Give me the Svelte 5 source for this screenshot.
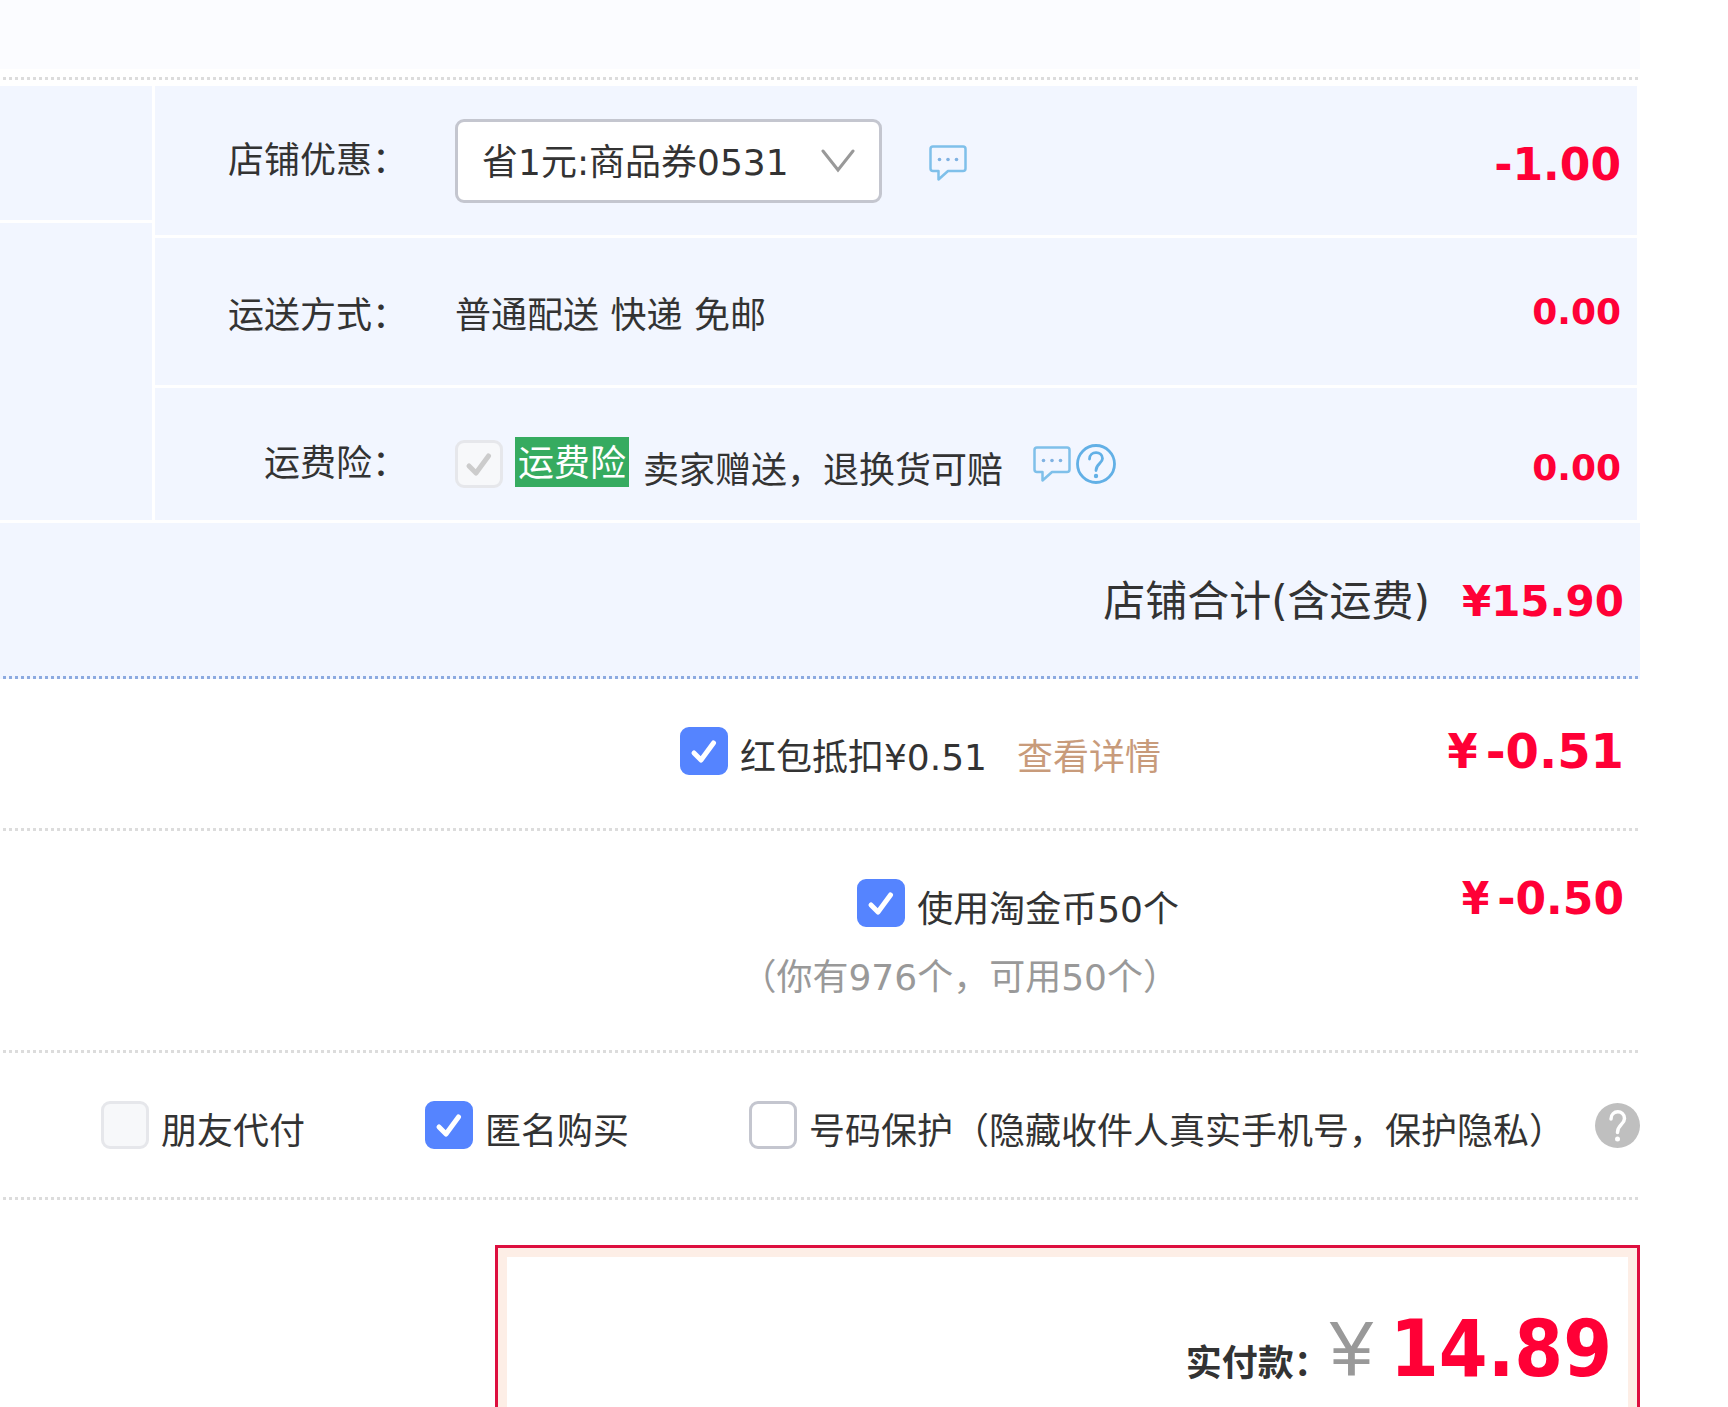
<script lang="ts">
  // Order options, toggled by the buyer
  let useRedPacket = $state(true);
  let useCoins = $state(true);
  let insurance = $state(true);
  let friendPay = $state(false);
  let anonymous = $state(true);
  let hideNumber = $state(false);

  let coupon = $state('0531');
</script>

{#snippet tick()}
  <svg class="tick" viewBox="0 0 48 48" aria-hidden="true">
    <path d="M14 26 L21 33 L33.500 16" />
  </svg>
{/snippet}

{#snippet chatIcon()}
  <svg class="chat" viewBox="0 0 38 36" aria-hidden="true">
    <path d="M4 1.5 H34 Q36.500 1.500 36.500 4 V23.500 Q36.500 26 34 26 H19 L9.500 34.500 V26 H4 Q1.500 26 1.500 23.500 V4 Q1.500 1.500 4 1.500 Z" />
    <circle cx="10.500" cy="14.500" r="1.800" />
    <circle cx="19" cy="14.500" r="1.800" />
    <circle cx="27.500" cy="14.500" r="1.800" />
  </svg>
{/snippet}

<main class="page">
  <header class="top"></header>
  <hr class="dots" />

  <section class="order">
    <div class="side">
      <div class="cell side-first"></div>
      <div class="cell side-rest"></div>
    </div>
    <div class="rows">
      <div class="cell row">
        <label class="name" for="coupon">店铺优惠：</label>
        <div class="value">
          <div class="picker">
            <select id="coupon" bind:value={coupon}>
              <option value="0531">省1元:商品券0531</option>
              <option value="none">不使用优惠</option>
            </select>
            <svg class="arrow" viewBox="0 0 34 24" aria-hidden="true">
              <path d="M2 2 L17 21 L32 2" />
            </svg>
          </div>
          <button class="icon-button after-picker" aria-label="留言">{@render chatIcon()}</button>
        </div>
        <strong class="amount big low">-1.00</strong>
      </div>

      <div class="cell row row-mid">
        <span class="name low">运送方式：</span>
        <div class="value low">普通配送 快递 免邮</div>
        <strong class="amount">0.00</strong>
      </div>

      <div class="cell row row-last">
        <span class="name">运费险：</span>
        <div class="value">
          <label class="check">
            <span class="box">
              <input type="checkbox" bind:checked={insurance} disabled />
              {@render tick()}
            </span>
            <span class="tag">运费险</span>
            <span class="gift">卖家赠送，退换货可赔</span>
          </label>
          <button class="icon-button after-gift" aria-label="留言">{@render chatIcon()}</button>
          <button class="icon-button" aria-label="帮助">
            <svg class="help" viewBox="0 0 40 40" aria-hidden="true">
              <circle class="ring" cx="20" cy="20" r="18.500" />
              <path d="M13.500 15 C13.500 6.500 26.500 6.500 26.500 14.500 C26.500 19.500 20 19.500 20 26.500" />
              <circle class="dot" cx="20" cy="32" r="2.200" />
            </svg>
          </button>
        </div>
        <strong class="amount low">0.00</strong>
      </div>
    </div>
  </section>

  <section class="total">
    <span>店铺合计(含运费)</span>
    <strong class="amount">¥15.90</strong>
  </section>
  <hr class="dots blue" />

  <section class="discount packet">
    <div class="choice">
      <label class="check">
        <span class="box">
          <input type="checkbox" bind:checked={useRedPacket} />
          {@render tick()}
        </span>
        <span>红包抵扣¥0.51</span>
      </label>
      <a href="#details">查看详情</a>
    </div>
    <strong class="amount huge"><span class="yen">¥</span>-0.51</strong>
  </section>
  <hr class="dots" />

  <section class="discount coins">
    <div class="choice">
      <label class="check">
        <span class="box">
          <input type="checkbox" bind:checked={useCoins} />
          {@render tick()}
        </span>
        <span>使用淘金币50个</span>
      </label>
      <p class="note">（你有976个，可用50个）</p>
    </div>
    <strong class="amount big"><span class="yen">¥</span>-0.50</strong>
  </section>
  <hr class="dots" />

  <section class="options">
    <label class="check">
      <span class="box">
        <input type="checkbox" bind:checked={friendPay} disabled />
        {@render tick()}
      </span>
      <span>朋友代付</span>
    </label>
    <label class="check">
      <span class="box">
        <input type="checkbox" bind:checked={anonymous} />
        {@render tick()}
      </span>
      <span>匿名购买</span>
    </label>
    <label class="check">
      <span class="box">
        <input type="checkbox" bind:checked={hideNumber} />
        {@render tick()}
      </span>
      <span>号码保护（隐藏收件人真实手机号，保护隐私）</span>
    </label>
    <button class="icon-button push" aria-label="帮助">
      <svg class="help-solid" viewBox="0 0 45 45" aria-hidden="true">
        <circle class="disc" cx="22.500" cy="22.500" r="22.500" />
        <path d="M16 16 C16 6.500 29.500 6.500 29.500 15.500 C29.500 21.500 22.500 21.500 22.500 29.500" />
        <circle class="dot" cx="22.500" cy="36" r="2.500" />
      </svg>
    </button>
  </section>
  <hr class="dots" />

  <section class="pay">
    <div class="pay-inner">
      <strong class="pay-label">实付款：</strong>
      <span class="pay-yen">¥</span>
      <strong class="pay-sum">14.89</strong>
    </div>
  </section>
</main>

<style>
  :global(body) {
    margin: 0;
    background: #fff;
  }

  .page {
    box-sizing: border-box;
    display: flex;
    flex-direction: column;
    min-height: 100vh;
    margin-right: 88px;
    font-family: "DejaVu Sans", "Noto Sans CJK SC", sans-serif;
    font-size: 36px;
    line-height: 48px;
    color: #333;
    white-space: nowrap;
  }

  .top {
    height: 69px;
    margin-bottom: 8px;
    background: #fbfcff;
  }

  /* Square dots, 3px on and 3px off */
  .dots {
    flex: none;
    width: 100%;
    height: 3px;
    margin: 0;
    border: none;
    background: repeating-linear-gradient(to right, transparent 0 3px, #dcdcdc 3px 6px);
  }

  .dots.blue {
    background: repeating-linear-gradient(to right, #f2f6ff 0 3px, #8caae0 3px 6px);
  }

  .order {
    display: grid;
    grid-template-columns: 152px 1fr;
    gap: 3px;
    margin: 6px 3px 3px 0;
  }

  .side,
  .rows {
    display: flex;
    flex-direction: column;
    gap: 3px;
  }

  .cell,
  .total {
    background: #f2f6ff;
  }

  .side-first {
    height: 134px;
  }

  .side-rest {
    flex: 1;
  }

  .row {
    box-sizing: border-box;
    display: grid;
    grid-template-columns: 253px 1fr auto;
    column-gap: 47px;
    align-items: center;
    min-height: 149px;
    padding-right: 16px;
  }

  .row-mid {
    min-height: 147px;
  }

  .row-last {
    min-height: 132px;
    padding-top: 20px;
  }

  .name {
    text-align: right;
  }

  .value {
    display: flex;
    align-items: center;
  }

  .picker {
    display: grid;
    align-items: center;
    width: 427px;
  }

  .picker > * {
    grid-area: 1 / 1;
  }

  select {
    appearance: none;
    box-sizing: border-box;
    width: 100%;
    height: 84px;
    padding: 4px 24px 0;
    border: 3px solid #c4c6cf;
    border-radius: 9px;
    background: #fff;
    font: inherit;
    color: #333;
  }

  .arrow {
    justify-self: end;
    width: 34px;
    height: 24px;
    margin-right: 27px;
    fill: none;
    stroke: #999;
    stroke-width: 3;
    stroke-linecap: round;
    pointer-events: none;
  }

  .icon-button {
    display: flex;
    padding: 0;
    border: none;
    background: none;
    cursor: pointer;
  }

  .after-picker {
    margin-left: 47px;
    padding-top: 4px;
  }

  .after-gift {
    margin: 0 5px 0 30px;
  }

  .push {
    margin-left: auto;
  }

  .chat {
    width: 38px;
    height: 36px;
    fill: none;
    stroke: #7fc0ea;
    stroke-width: 2.5;
    stroke-linejoin: round;
  }

  .chat circle {
    fill: #7fb2e2;
    stroke: none;
  }

  .help {
    width: 40px;
    height: 40px;
    fill: none;
    stroke: #62b0e6;
    stroke-width: 2.8;
    stroke-linecap: round;
  }

  .help .dot {
    fill: #62b0e6;
    stroke: none;
  }

  .help-solid {
    width: 45px;
    height: 45px;
    fill: none;
    stroke: #fff;
    stroke-width: 3.5;
    stroke-linecap: round;
  }

  .help-solid .disc {
    fill: #bfbfbf;
    stroke: none;
  }

  .help-solid .dot {
    fill: #fff;
    stroke: none;
  }

  .check {
    display: flex;
    gap: 12px;
    height: 48px;
    line-height: 62px;
  }

  .box {
    display: grid;
    width: 48px;
    height: 48px;
  }

  .box > * {
    grid-area: 1 / 1;
  }

  input {
    appearance: none;
    box-sizing: border-box;
    width: 48px;
    height: 48px;
    margin: 0;
    border: 3px solid #c4c6cf;
    border-radius: 9px;
    background: #fff;
  }

  input:checked {
    border-color: #5584ff;
    background: #5584ff;
  }

  input:disabled {
    border-color: #e6e7eb;
    background: #f7f8fa;
  }

  .tick {
    display: none;
    width: 48px;
    height: 48px;
    fill: none;
    stroke: #fff;
    stroke-width: 5;
    stroke-linecap: round;
    stroke-linejoin: round;
    pointer-events: none;
  }

  input:checked + :global(.tick) {
    display: block;
  }

  input:disabled + :global(.tick) {
    stroke: #ccc;
  }

  .tag {
    align-self: center;
    height: 50px;
    margin-bottom: 4px;
    padding: 0 3px;
    background: #36ab60;
    line-height: 54px;
    color: #fff;
  }

  .gift {
    margin-left: 2px;
  }

  .amount {
    font-weight: bold;
    color: #ff0036;
  }

  .big {
    font-size: 44px;
  }

  .huge {
    font-size: 48px;
  }

  .low {
    padding-top: 8px;
  }

  .yen {
    margin-right: 8px;
    font-family: "DejaVu Sans Condensed", "DejaVu Sans", sans-serif;
  }

  .total {
    box-sizing: border-box;
    display: flex;
    align-items: center;
    justify-content: flex-end;
    gap: 32px;
    height: 153px;
    padding: 4px 16px 0 0;
    font-size: 42px;
  }

  .discount {
    display: grid;
    height: 101px;
    padding: 48px 16px 0 0;
  }

  .discount > .amount {
    text-align: right;
  }

  .choice {
    display: flex;
  }

  .packet {
    grid-template-columns: 1fr 463px;
  }

  .packet .choice {
    justify-content: flex-end;
    gap: 30px;
  }

  .packet a {
    line-height: 62px;
    color: #c89b7b;
    text-decoration: none;
  }

  .coins {
    grid-template-columns: 1fr 445px;
    height: 171px;
  }

  .coins .choice {
    flex-direction: column;
    align-items: flex-end;
  }

  .coins .amount {
    line-height: 40px;
  }

  .note {
    margin: 27px 0 0;
    color: #999;
  }

  .options {
    display: flex;
    align-items: center;
    height: 144px;
    padding-left: 101px;
  }

  .options .check + .check {
    margin-left: 120px;
  }

  .pay {
    flex: 1;
    display: flex;
    width: 1145px;
    box-sizing: border-box;
    align-self: flex-end;
    margin-top: 45px;
    border: 3px solid #dd0f3f;
    border-bottom: none;
  }

  .pay-inner {
    flex: 1;
    display: flex;
    align-items: baseline;
    justify-content: flex-end;
    padding: 52px 16px 0 0;
    border: 9px solid #fdeee6;
    border-bottom: none;
  }

  .pay-yen {
    margin-right: 17px;
    font-family: "Liberation Sans", sans-serif;
    font-size: 78px;
    line-height: 80px;
    color: #999;
  }

  .pay-sum {
    font-family: "DejaVu Sans Condensed", "DejaVu Sans", sans-serif;
    font-size: 78px;
    line-height: 80px;
    color: #ff0036;
  }
</style>
